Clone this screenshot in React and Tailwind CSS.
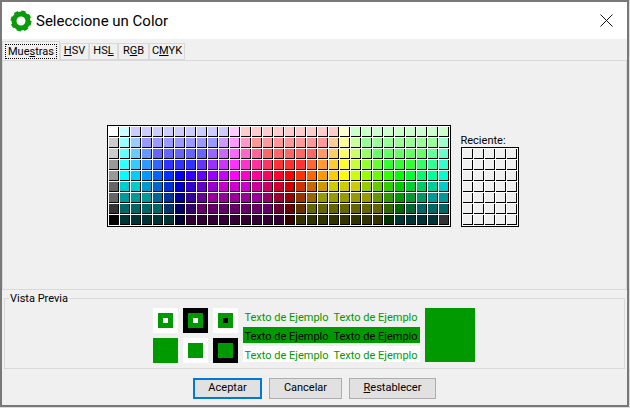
import React from 'react';

const uiFont = { fontFamily: 'Roboto, "Noto Sans", sans-serif' };

// swatch palette, one string per row, "abc*3" means three cells of that colour
const swatchRows = [
  'fff cff ccf*9 fcf fcc*9 ffc cfc*9',
  'ccc 9ff 9cf 99f*7 c9f f9f f9c f99*7 fc9 ff9 cf9 9f9*7 9fc',
  'ccc 6ff 6cf 69f 66f*5 96f c6f f6f f6c f69 f66*5 f96 fc6 ff6 cf6 9f6 6f6*5 6f9 6fc',
  '999 3ff 3cf 39f 36f 33f*3 63f 93f c3f f3f f3c f39 f36 f33*3 f63 f93 fc3 ff3 cf3 9f3 6f3 3f3*3 3f6 3f9 3fc',
  '999 0ff 0cf 09f 06f 03f 00f 30f 60f 90f c0f f0f f0c f09 f06 f03 f00 f30 f60 f90 fc0 ff0 cf0 9f0 6f0 3f0 0f0 0f3 0f6 0f9 0fc',
  '666 0cc*2 09c 06c 03c 00c 30c 60c 90c c0c*3 c09 c06 c03 c00 c30 c60 c90 cc0*3 9c0 6c0 3c0 0c0 0c3 0c6 0c9 0cc',
  '666 099*3 069 039 009 309 609 909*5 906 903 900 930 960 990*5 690 390 090 093 096 099*2',
  '333 066*4 036 006 306 606*7 603 600 630 660*7 360 060 063 066*3',
  '000 033*5 003 303*9 300 330*8 030 033*4 333',
];

const swatches = swatchRows.flatMap((row) =>
  row.split(' ').flatMap((part) => {
    const [hex, count] = part.split('*');
    return Array(Number(count || 1)).fill('#' + hex);
  })
);

const SwatchGrid = ({ colors, gridClass }) => (
  <div className={`grid ${gridClass} bg-white border border-black pl-px pt-px`}>
    {colors.map((color, i) => (
      <div key={i} className="w-[11px] h-[11px] border-r border-b border-white">
        <div className="w-[10px] h-[10px] border-r border-b border-black" style={{ backgroundColor: color }} />
      </div>
    ))}
  </div>
);

const Square = ({ outer, middle, inner }) => (
  <div className={`w-[25px] h-[25px] p-[5px] ${outer}`}>
    <div className={`w-[15px] h-[15px] p-[5px] ${middle}`}>
      {inner && <div className={`w-[5px] h-[5px] ${inner}`} />}
    </div>
  </div>
);

const SampleRow = ({ className }) => (
  <div className={`w-[177px] h-4 pl-0.5 flex gap-[7px] leading-[19px] text-[11px] whitespace-nowrap ${className}`}>
    <span className="w-[82px]">Texto de Ejemplo</span>
    <span className="w-[82px]">Texto de Ejemplo</span>
  </div>
);

const Tab = ({ before, mark, after, width, active }) => (
  <div
    className={`flex justify-center border border-[#d9d9d9] text-[11px] text-black bg-[#f0f0f0] ${width} ${
      active ? 'h-5 -mb-px border-b-0 pt-[2px] px-[2px]' : 'h-[17px] items-center'
    }`}
  >
    <span className={active ? 'w-full h-[15px] text-center border border-dotted border-black leading-[13px]' : ''}>
      {before}
      <span className="underline">{mark}</span>
      {after}
    </span>
  </div>
);

const Button = ({ children, focused, width }) => (
  <button
    className={`h-[21px] bg-[#e1e1e1] text-[11px] text-black ${width} ${
      focused ? 'border-2 border-[#0078d7]' : 'border border-[#adadad]'
    }`}
  >
    {children}
  </button>
);

export default function App() {
  return (
    <div className="w-[630px] h-[408px] bg-[#dcdcdc]" style={uiFont}>
      <div className="w-[629px] h-[407px] border-2 border-[#787878] flex flex-col bg-[#f0f0f0]">
        <div className="h-[37px] shrink-0 bg-white flex items-center pl-2 pr-[14px]">
          <svg width="22" height="22" viewBox="0 0 22 22" fill="none" stroke="#0b9a0b">
            <circle cx="11" cy="11" r="7" strokeWidth="5" />
            <circle cx="11" cy="11" r="9.2" strokeWidth="2.6" strokeDasharray="4.2 3.03" />
          </svg>
          <span className="ml-1 mt-0.5 text-[15px] text-black">Seleccione un Color</span>
          <svg className="ml-auto" width="13" height="13" viewBox="0 0 13 13">
            <path d="M.5.5l12 12M12.5.5l-12 12" stroke="#111" strokeWidth="1" fill="none" />
          </svg>
        </div>

        <div className="flex items-end pt-0.5 shrink-0">
          <Tab before="Mue" mark="s" after="tras" width="w-[58px]" active />
          <Tab before="" mark="H" after="SV" width="w-[29px]" />
          <Tab before="HS" mark="L" after="" width="w-[29px]" />
          <Tab before="R" mark="G" after="B" width="w-[31px]" />
          <Tab before="C" mark="M" after="YK" width="w-[36px]" />
        </div>

        <div className="h-[230px] shrink-0 border border-[#d9d9d9] flex justify-center items-end pb-[62px] pr-1 gap-[10px]">
          <SwatchGrid colors={swatches} gridClass="grid-cols-[repeat(31,11px)]" />
          <div>
            <div className="text-[11px] leading-3 text-black">Reciente:</div>
            <SwatchGrid colors={Array(35).fill('#f0f0f0')} gridClass="grid-cols-[repeat(5,11px)]" />
          </div>
        </div>

        <div className="relative mt-[8px] mx-0.5 h-[71px] shrink-0 border border-[#d9d9d9] flex justify-center items-start pt-[9px] pr-0.5 gap-[5px]">
          <span className="absolute left-[4px] -top-[7px] px-px bg-[#f0f0f0] text-[11px] leading-[14px] text-black">Vista Previa</span>
          <div className="grid grid-cols-[25px_25px_25px] gap-[5px]">
            <Square outer="bg-white" middle="bg-[#009900]" inner="bg-white" />
            <Square outer="bg-black" middle="bg-[#009900]" inner="bg-white" />
            <Square outer="bg-white" middle="bg-[#009900]" inner="bg-black" />
            <Square outer="bg-[#009900]" middle="bg-[#009900]" />
            <Square outer="bg-white" middle="bg-[#009900]" />
            <Square outer="bg-black" middle="bg-[#009900]" />
          </div>
          <div className="flex flex-col gap-[3px]">
            <SampleRow className="text-[#009900]" />
            <SampleRow className="bg-[#009900] text-black" />
            <SampleRow className="bg-white text-[#009900]" />
          </div>
          <div className="w-[50px] h-[54px] bg-[#009900]" />
        </div>

        <div className="flex-1 flex justify-center items-start pt-[9px] gap-[7px]">
          <Button focused width="w-[69px]">Aceptar</Button>
          <Button width="w-[73px]">Cancelar</Button>
          <Button width="w-[87px]"><span className="underline">R</span>establecer</Button>
        </div>
      </div>
    </div>
  );
}
